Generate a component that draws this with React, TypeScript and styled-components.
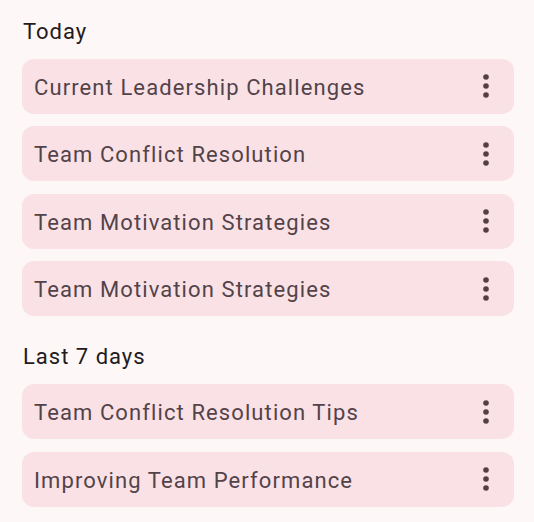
import React from "react";
import styled, { createGlobalStyle } from "styled-components";

const GlobalStyle = createGlobalStyle`
  html, body {
    margin: 0;
    padding: 0;
    background: #fdf7f7;
  }
  body {
    font-family: Roboto, "Liberation Sans", sans-serif;
  }
`;

const Page = styled.div`
  display: flex;
  flex-direction: column;
  padding: 18.5px 20px 16px 22px;
`;

const SectionTitle = styled.h2<{ $first?: boolean }>`
  margin: ${(p) => (p.$first ? "0" : "28px")} 0 14px 1px;
  font-size: 22px;
  line-height: 26px;
  font-weight: 400;
  letter-spacing: 1px;
  color: #231a1d;
`;

const List = styled.div`
  display: flex;
  flex-direction: column;
  gap: 12.5px;
`;

const Item = styled.div`
  display: flex;
  align-items: center;
  justify-content: space-between;
  height: 55px;
  padding: 0 16px 0 12px;
  border-radius: 12px;
  background: #fae1e6;
`;

const ItemTitle = styled.span`
  padding-top: 3px;
  font-size: 22px;
  line-height: 26px;
  letter-spacing: 1.1px;
  color: #524349;
  white-space: nowrap;
`;

const MenuButton = styled.button`
  display: flex;
  align-items: center;
  justify-content: center;
  width: 24px;
  height: 36px;
  padding: 0;
  border: none;
  background: none;
  cursor: pointer;
`;

const MoreIcon = () => (
  <svg width="12" height="26" viewBox="0 0 12 26">
    <circle cx="6" cy="4" r="2.8" fill="#553e47" />
    <circle cx="6" cy="13" r="2.8" fill="#553e47" />
    <circle cx="6" cy="22" r="2.8" fill="#553e47" />
  </svg>
);

const sections = [
  {
    title: "Today",
    items: [
      "Current Leadership Challenges",
      "Team Conflict Resolution",
      "Team Motivation Strategies",
      "Team Motivation Strategies",
    ],
  },
  {
    title: "Last 7 days",
    items: ["Team Conflict Resolution Tips", "Improving Team Performance"],
  },
];

export default function App() {
  return (
    <>
      <GlobalStyle />
      <Page>
        {sections.map((section, i) => (
          <React.Fragment key={section.title}>
            <SectionTitle $first={i === 0}>{section.title}</SectionTitle>
            <List>
              {section.items.map((item, j) => (
                <Item key={j}>
                  <ItemTitle>{item}</ItemTitle>
                  <MenuButton aria-label="More options">
                    <MoreIcon />
                  </MenuButton>
                </Item>
              ))}
            </List>
          </React.Fragment>
        ))}
      </Page>
    </>
  );
}
